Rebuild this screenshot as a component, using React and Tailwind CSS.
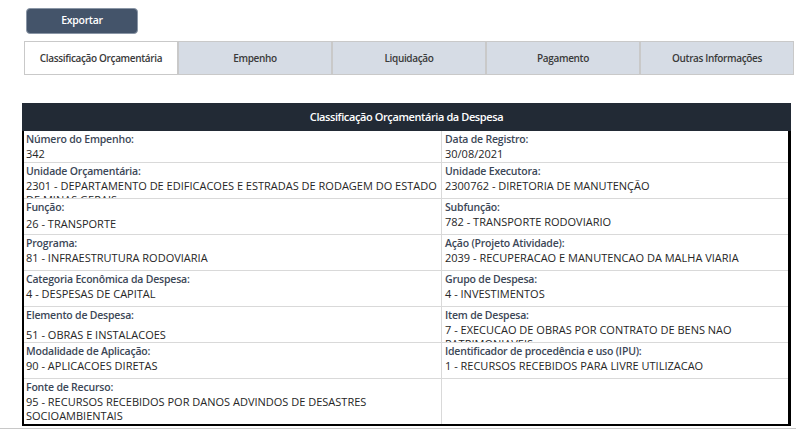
import React from "react";

const rows = [
  {
    h: "h-[32px]",
    l: { label: "Número do Empenho:", value: "342" },
    r: { label: "Data de Registro:", value: "30/08/2021" },
  },
  {
    h: "h-[36px]",
    l: {
      label: "Unidade Orçamentária:",
      value: "2301 - DEPARTAMENTO DE EDIFICACOES E ESTRADAS DE RODAGEM DO ESTADO DE MINAS GERAIS",
    },
    r: { label: "Unidade Executora:", value: "2300762 - DIRETORIA DE MANUTENÇÃO" },
  },
  {
    h: "h-[36px]",
    l: { label: "Função:", value: "26 - TRANSPORTE", gap: true },
    r: { label: "Subfunção:", value: "782 - TRANSPORTE RODOVIARIO" },
  },
  {
    h: "h-[36px]",
    l: { label: "Programa:", value: "81 - INFRAESTRUTURA RODOVIARIA" },
    r: { label: "Ação (Projeto Atividade):", value: "2039 - RECUPERACAO E MANUTENCAO DA MALHA VIARIA" },
  },
  {
    h: "h-[36px]",
    l: { label: "Categoria Econômica da Despesa:", value: "4 - DESPESAS DE CAPITAL" },
    r: { label: "Grupo de Despesa:", value: "4 - INVESTIMENTOS" },
  },
  {
    h: "h-[36px]",
    l: { label: "Elemento de Despesa:", value: "51 - OBRAS E INSTALACOES", push: true },
    r: { label: "Item de Despesa:", value: "7 - EXECUCAO DE OBRAS POR CONTRATO DE BENS NAO PATRIMONIAVEIS" },
  },
  {
    h: "h-[36px]",
    l: { label: "Modalidade de Aplicação:", value: "90 - APLICACOES DIRETAS" },
    r: { label: "Identificador de procedência e uso (IPU):", value: "1 - RECURSOS RECEBIDOS PARA LIVRE UTILIZACAO" },
  },
  {
    h: "h-[45px]",
    last: true,
    l: {
      label: "Fonte de Recurso:",
      value: "95 - RECURSOS RECEBIDOS POR DANOS ADVINDOS DE DESASTRES SOCIOAMBIENTAIS",
    },
    r: null,
  },
];

function Cell({ data, left, last }) {
  return (
    <div
      className={`overflow-hidden pt-[1px] ${left ? "pl-[2px] border-r border-[#d9d9d9]" : "pl-[3px]"} ${
        last ? "" : "border-b border-[#d9d9d9]"
      }`}
    >
      {data && (
        <>
          <div className="text-[#3c4757] font-semibold text-[10.5px] tracking-[-0.2px] leading-[15px]">{data.label}</div>
          <div
            className={`text-[#262626] text-[11px] leading-[14px] ${data.push ? "mt-[5px]" : ""} ${
              data.gap ? "mt-[2px]" : ""
            }`}
          >
            {data.value}
          </div>
        </>
      )}
    </div>
  );
}

export default function App() {
  const tabs = ["Classificação Orçamentária", "Empenho", "Liquidação", "Pagamento", "Outras Informações"];
  return (
    <div
      className="relative w-[796px] h-[429px] overflow-hidden bg-white"
      style={{ fontFamily: '"Open Sans", "Noto Sans", sans-serif' }}
    >
      <div className="pt-[8px] pl-[26px]">
        <button className="w-[112px] h-[26px] rounded-[4px] bg-[#44546a] border border-[#8a96a6] text-white text-[10.5px] tracking-[-0.3px] font-semibold flex items-center justify-center">
          Exportar
        </button>
      </div>
      <div className="ml-[24px] mt-[7px] w-[770px] h-[34px] flex border border-[#c9c9c9]">
        {tabs.map((t, i) => (
          <div
            key={t}
            className={`flex-1 flex items-center justify-center text-[10px] tracking-[-0.35px] font-semibold text-[#3a3a3a] ${
              i === 0 ? "bg-white" : "bg-[#d6dce5]"
            } ${i > 0 ? "border-l-2 border-[#c9c9c9]" : ""}`}
          >
            {t}
          </div>
        ))}
      </div>
      <div className="ml-[22px] mt-[28px] w-[769px]">
        <div className="h-[28px] bg-[#222a35] flex items-center justify-center text-white text-[11px] tracking-[-0.4px] font-semibold">
          Classificação Orçamentária da Despesa
        </div>
        <div className="border-l-2 border-r-[3px] border-b-2 border-black grid grid-cols-[418px_1fr]">
          {rows.map((r, i) => (
            <React.Fragment key={i}>
              <div className={`${r.h} grid`}>
                <Cell data={r.l} left last={r.last} />
              </div>
              <div className={`${r.h} grid`}>
                <Cell data={r.r} last={r.last} />
              </div>
            </React.Fragment>
          ))}
        </div>
      </div>
      <div className="absolute left-0 right-0 top-[428px] h-px bg-[#c8c8c8]" />
    </div>
  );
}
